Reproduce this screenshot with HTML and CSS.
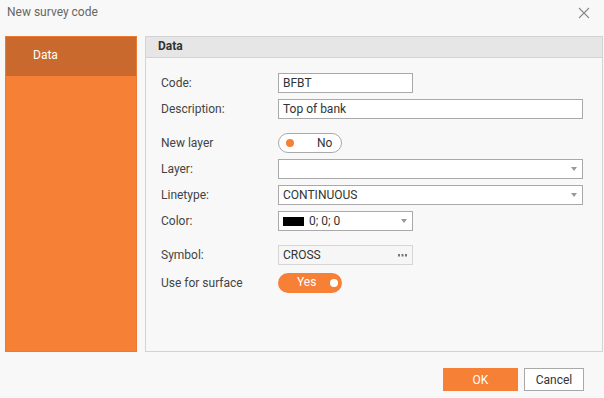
FILE: index.html
```html
<!DOCTYPE html>
<html lang="en">
  <head>
    <meta charset="utf-8" />
    <title>New survey code</title>
    <link rel="stylesheet" href="styles.css">
  </head>
  <body>
    <div class="dialog">
      <div class="titlebar">
        <span class="title">New survey code</span>
        <svg class="close" width="12" height="12" viewBox="0 0 12 12">
          <path d="M1 1L11 11M11 1L1 11" stroke="#8a8a8a" stroke-width="1.1" fill="none" />
        </svg>
      </div>

      <div class="content">
        <ul class="sidebar">
          <li class="active">Data</li>
        </ul>

        <div class="panel">
          <div class="panel-head">Data</div>
          <div class="form">
            <div class="row">
              <label>Code:</label>
              <div class="field short">BFBT</div>
            </div>
            <div class="row">
              <label>Description:</label>
              <div class="field">Top of bank</div>
            </div>

            <div class="row group">
              <label>New layer</label>
              <div class="toggle off"><span class="dot"></span><span class="txt">No</span></div>
            </div>
            <div class="row">
              <label>Layer:</label>
              <div class="field select"><span></span><i class="arrow"></i></div>
            </div>
            <div class="row">
              <label>Linetype:</label>
              <div class="field select"><span>CONTINUOUS</span><i class="arrow"></i></div>
            </div>
            <div class="row">
              <label>Color:</label>
              <div class="field select short"><span><b class="swatch"></b>0; 0; 0</span><i class="arrow"></i></div>
            </div>

            <div class="row group">
              <label>Symbol:</label>
              <div class="field short readonly">
                <span>CROSS</span>
                <svg class="more" width="9" height="3" viewBox="0 0 9 3">
                  <rect x="0" y="0" width="2" height="2.5" fill="#777" />
                  <rect x="3.5" y="0" width="2" height="2.5" fill="#777" />
                  <rect x="7" y="0" width="2" height="2.5" fill="#777" />
                </svg>
              </div>
            </div>
            <div class="row surface">
              <label>Use for surface</label>
              <div class="toggle on"><span class="txt">Yes</span><span class="dot"></span></div>
            </div>
          </div>
        </div>
      </div>

      <div class="buttons">
        <button class="ok">OK</button>
        <button class="cancel">Cancel</button>
      </div>
    </div>
  </body>
</html>
```

FILE: styles.css
```css
* {
  margin: 0;
  padding: 0;
  box-sizing: border-box;
}

body {
  background: #f8f8f8;
  font-family: Roboto, "Liberation Sans", sans-serif;
  font-size: 12px;
  color: #444;
}

.dialog {
  width: 604px;
  height: 398px;
  display: flex;
  flex-direction: column;
}

.titlebar {
  height: 36px;
  display: flex;
  justify-content: space-between;
  padding: 5px 14px 0 7px;
}

.title {
  color: #666;
  font-size: 12px;
  line-height: 14px;
}

.close {
  margin-top: 2px;
}

.content {
  display: flex;
  gap: 8px;
  height: 316px;
  padding: 0 1px 0 5px;
}

.sidebar {
  list-style: none;
  width: 132px;
  background: #f58036;
  border: 1px solid #ee7a32;
}

.sidebar li {
  height: 39px;
  line-height: 37px;
  padding-left: 27px;
  color: #fff;
  font-size: 12px;
}

.sidebar li.active {
  background: #c9692d;
}

.panel {
  flex: 1;
  border: 1px solid #d3d3d3;
  background: #f8f8f8;
}

.panel-head {
  height: 21px;
  line-height: 19px;
  background: #e6e6e6;
  border-bottom: 1px solid #d3d3d3;
  padding-left: 12px;
  font-weight: bold;
  color: #333;
}

.form {
  display: flex;
  flex-direction: column;
  padding: 15px 19px 0 15px;
}

.row {
  display: flex;
  align-items: center;
  height: 20px;
  margin-bottom: 6px;
}

.row.group {
  margin-top: 8px;
}

.row.surface {
  margin-top: 2px;
}

.row label {
  width: 117px;
  color: #444;
}

.field {
  flex: 1;
  height: 20px;
  border: 1px solid #a9a9a9;
  background: #fff;
  color: #333;
  padding: 0 4px;
  line-height: 18px;
  display: flex;
  justify-content: space-between;
  align-items: center;
}

.field.short {
  flex: none;
  width: 135px;
}

.field.readonly {
  background: #f6f6f6;
  border-color: #d6d6d6;
}

.more {
  margin-right: 1px;
}

.arrow {
  width: 0;
  height: 0;
  border-left: 3.5px solid transparent;
  border-right: 3.5px solid transparent;
  border-top: 4px solid #999;
  margin-right: 1px;
}

.swatch {
  display: inline-block;
  width: 21px;
  height: 9px;
  background: #000;
  margin-right: 5px;
  vertical-align: -1px;
}

.toggle {
  width: 64px;
  height: 20px;
  border-radius: 10px;
  display: flex;
  align-items: center;
  padding: 0 7px;
}

.toggle .dot {
  width: 8px;
  height: 8px;
  border-radius: 50%;
}

.toggle.off {
  background: #fff;
  border: 1px solid #a9a9a9;
}

.toggle.off .dot {
  background: #f58036;
}

.toggle.off .txt {
  margin-left: 23px;
  color: #333;
}

.toggle.on {
  background: #f58036;
  justify-content: space-between;
  padding: 0 4px 0 19px;
}

.toggle.on .dot {
  background: #fff;
}

.toggle.on .txt {
  color: #fff;
  margin-top: -2px;
}

.buttons {
  display: flex;
  justify-content: flex-end;
  gap: 6px;
  padding: 16px 20px 0 0;
}

button {
  font-family: Roboto, "Liberation Sans", sans-serif;
  font-size: 12px;
  height: 23px;
}

.ok {
  width: 75px;
  background: #f58036;
  color: #fff;
  border: none;
}

.cancel {
  width: 60px;
  background: #fff;
  color: #333;
  border: 1px solid #a9a9a9;
}
```
